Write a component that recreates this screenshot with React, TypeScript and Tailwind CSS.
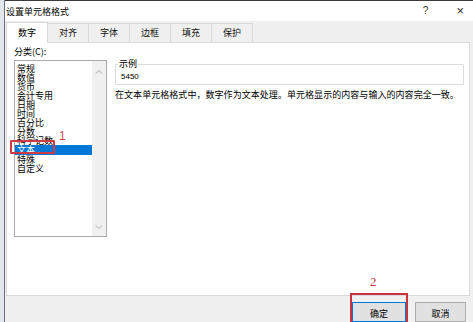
import React from "react";

const tabs = ["数字", "对齐", "字体", "边框", "填充", "保护"];
const categories = [
  "常规",
  "数值",
  "货币",
  "会计专用",
  "日期",
  "时间",
  "百分比",
  "分数",
  "科学记数",
  "文本",
  "特殊",
  "自定义",
];

function Chevron({ up }: { up?: boolean }) {
  return (
    <svg width="8" height="5" viewBox="0 0 8 5" className="block">
      <path
        d={up ? "M1 4.5 L4 1.5 L7 4.5" : "M1 0.5 L4 3.5 L7 0.5"}
        fill="none"
        stroke="#a6a6a6"
        strokeWidth="1"
      />
    </svg>
  );
}

export default function App() {
  return (
    <div
      className="relative flex w-[473px] h-[322px] overflow-hidden bg-[#f0f0f0] text-[#000] text-[9px] leading-none"
      style={{ fontFamily: '"Noto Sans CJK SC", "Liberation Sans", sans-serif' }}
    >
      {/* window behind */}
      <div className="w-[5px] h-full bg-[#e3e6ea] border-r border-[#6b7078]" />

      <div className="flex flex-col flex-1 border-t border-[#3a3a3a]">
        {/* title bar */}
        <div className="flex items-center h-[20px] bg-white pl-[1px] pr-[9px]">
          <span className="text-[9px] mt-[2px]">设置单元格格式</span>
          <span className="ml-auto text-[10px] text-[#333]" style={{ fontFamily: '"Liberation Sans", sans-serif' }}>
            ?
          </span>
          <span className="ml-[28px] text-[13px] font-light text-[#333]" style={{ fontFamily: '"Liberation Sans", sans-serif' }}>
            ×
          </span>
        </div>

        {/* tab row */}
        <div className="flex items-end h-[21px] pl-[1px] mr-[3px]">
          {tabs.map((t, i) =>
            i === 0 ? (
              <div
                key={t}
                className="flex items-center justify-center w-[42px] h-[21px] bg-white border border-b-0 border-[#d9d9d9] relative top-[1px] z-10"
              >
                数字
              </div>
            ) : (
              <div
                key={t}
                className="flex items-center justify-center w-[41px] h-[19px] border-r border-t border-[#d9d9d9] text-[#111]"
              >
                {t}
              </div>
            )
          )}
        </div>

        {/* content panel */}
        <div className="relative flex h-[259px] ml-[1px] mr-[3px] bg-white border border-[#d9d9d9] pl-[7px] pt-[4px]">
          {/* left column */}
          <div className="flex flex-col w-[93px]">
            <div className="text-[9px] leading-[10px] h-[13px]">分类(C):</div>
            <div className="flex h-[177px] border border-[#a9a9a9] bg-white">
              <div className="flex flex-col flex-1 pt-[3px]">
                {categories.map((c) => (
                  <div
                    key={c}
                    className={
                      "h-[9.1px] pl-[2px] text-[9px] leading-[9.1px] whitespace-nowrap " +
                      (c === "文本" ? "bg-[#0078d7] text-white" : "text-black")
                    }
                  >
                    {c}
                  </div>
                ))}
              </div>
              <div className="flex flex-col items-center justify-between w-[14px] bg-[#f0f0f0] pt-[8px] pb-[6px]">
                <Chevron up />
                <Chevron />
              </div>
            </div>
          </div>

          {/* right column */}
          <div className="flex flex-col flex-1 ml-[8px] mr-[5px] pt-[2px]">
            <div className="relative h-[21px] mt-[15px] border border-[#dcdcdc] rounded-[1px]">
              <span className="absolute -top-[6px] left-[2px] bg-white px-[1px] text-[9px] leading-[10px]">
                示例
              </span>
              <span
                className="absolute top-[8px] left-[5px] text-[8px] leading-[8px]"
                style={{ fontFamily: '"Liberation Sans", sans-serif' }}
              >
                5450
              </span>
            </div>
            <div className="mt-[5px] text-[9px] leading-[10px] whitespace-nowrap tracking-[0.05px]">
              在文本单元格格式中，数字作为文本处理。单元格显示的内容与输入的内容完全一致。
            </div>
          </div>
        </div>

        {/* footer */}
        <div className="relative flex justify-end gap-[9px] pt-[6px] pr-[7px]">
          <div className="relative flex items-center justify-center w-[54px] h-[20px] bg-[#e1e1e1] border border-[#0078d7]">
            <span className="mt-[3px]">确定</span>
          </div>
          <div className="flex items-center justify-center w-[51px] h-[20px] bg-[#e1e1e1] border border-[#adadad]">
            <span className="mt-[3px]">取消</span>
          </div>
        </div>
      </div>

      {/* annotation 1 */}
      <div className="absolute left-[10px] top-[140px] w-[45px] h-[14px] border-2 border-[#cf3a45] rounded-[1px]" />
      <span
        className="absolute left-[59px] top-[130px] text-[12px] leading-[12px] text-[#d4474f]"
        style={{ fontFamily: '"Liberation Sans", sans-serif' }}
      >
        1
      </span>

      {/* annotation 2 */}
      <div className="absolute left-[350px] top-[293px] w-[58px] h-[32px] border-2 border-[#c9333e]" />
      <span
        className="absolute left-[370px] top-[275px] text-[13px] leading-[13px] text-[#c9333e]"
        style={{ fontFamily: '"Liberation Serif", serif' }}
      >
        2
      </span>
    </div>
  );
}
